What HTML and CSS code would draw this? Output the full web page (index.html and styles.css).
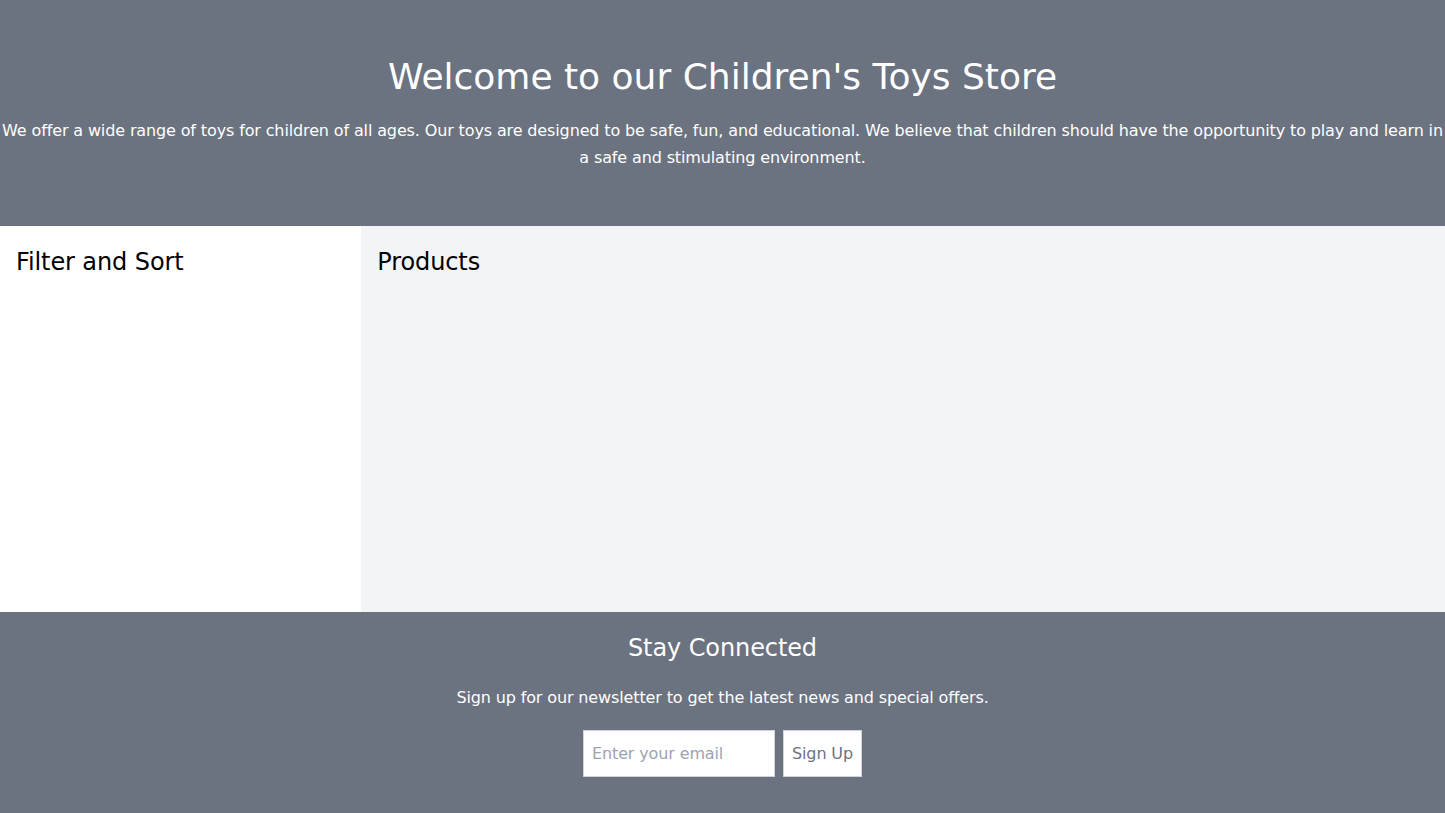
FILE: index.html
```html
<!DOCTYPE html>
<html lang="en">
<head>
<meta charset="utf-8">
<title>Children's Toys Store</title>
<link rel="stylesheet" href="styles.css">
</head>
<body>
<header class="hero">
  <h1 class="hero-title">Welcome to our Children's Toys Store</h1>
  <p class="hero-text">We offer a wide range of toys for children of all ages. Our toys are designed to be safe, fun, and educational. We believe that children should have the opportunity to play and learn in a safe and stimulating environment.</p>
</header>
<main class="content">
  <aside class="sidebar">
    <h2 class="section-title">Filter and Sort</h2>
  </aside>
  <section class="products">
    <h2 class="section-title">Products</h2>
  </section>
</main>
<footer class="footer">
  <h2 class="footer-title">Stay Connected</h2>
  <p class="footer-text">Sign up for our newsletter to get the latest news and special offers.</p>
  <form class="signup">
    <input class="signup-input" type="email" placeholder="Enter your email">
    <button class="signup-button" type="button">Sign Up</button>
  </form>
</footer>
</body>
</html>
```

FILE: styles.css
```css
* { box-sizing: border-box; }
html, body { margin: 0; padding: 0; }
body {
  font-family: "DejaVu Sans", Verdana, sans-serif;
  color: #000;
  background: #fff;
}
.hero {
  background: #6b7280;
  color: #fff;
  text-align: center;
  padding: 57px 0 0;
  height: 226px;
}
.hero-title {
  margin: 0 0 20px;
  font-size: 36px;
  line-height: 40px;
  font-weight: 400;
}
.hero-text {
  margin: 0;
  font-size: 16px;
  line-height: 27px;
  letter-spacing: -0.13px;
}
.content {
  display: flex;
  height: 386px;
}
.sidebar {
  width: 25%;
  background: #fff;
  padding: 20px 16px;
}
.products {
  flex: 1;
  background: #f3f4f6;
  padding: 20px 16px;
}
.section-title {
  margin: 0;
  font-size: 24px;
  line-height: 32px;
  font-weight: 400;
  letter-spacing: -0.1px;
}
.footer {
  background: #6b7280;
  color: #fff;
  text-align: center;
  padding: 18px 0 0;
  height: 201px;
}
.footer-title {
  margin: 0 0 20px;
  font-size: 24px;
  line-height: 36px;
  font-weight: 400;
  letter-spacing: -0.1px;
}
.footer-text {
  margin: 0 0 20px;
  font-size: 16px;
  line-height: 24px;
  letter-spacing: -0.13px;
}
.signup {
  display: flex;
  justify-content: center;
  gap: 8px;
}
.signup-input {
  width: 192px;
  height: 47px;
  border: 1px solid #d1d5db;
  padding: 8px;
  font-family: inherit;
  font-size: 16px;
  letter-spacing: -0.13px;
  color: #374151;
  background: #fff;
}
.signup-input::placeholder { color: #9ca3af; }
.signup-button {
  height: 47px;
  border: 1px solid #d1d5db;
  padding: 8px;
  background: #fff;
  color: #6b7280;
  font-family: inherit;
  font-size: 16px;
  letter-spacing: -0.13px;
}
```
